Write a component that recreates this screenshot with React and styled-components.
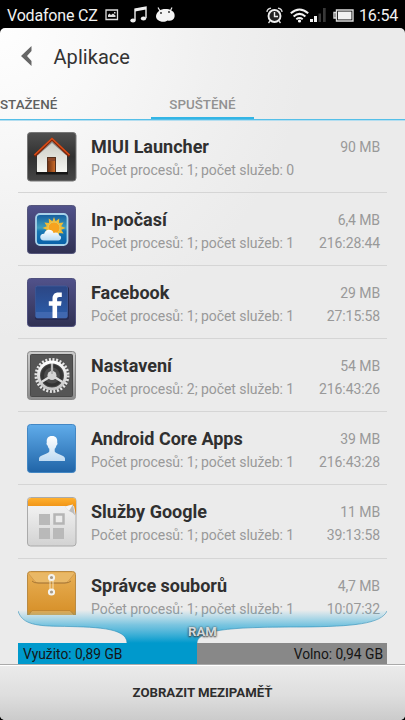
import React from 'react';
import styled, { createGlobalStyle } from 'styled-components';

const GlobalStyle = createGlobalStyle`
  * {
    box-sizing: border-box;
  }

  body {
    margin: 0;
    background: #000;
    font-family: Roboto, "Noto Sans", sans-serif;
  }
`;

const Phone = styled.div`
  display: flex;
  flex-direction: column;
  width: 405px;
  height: 720px;
  overflow: hidden;
  background: #000;
`;

const StatusBar = styled.header`
  display: flex;
  align-items: center;
  flex: none;
  height: 28px;
  padding: 2px 7px 0;
  color: #f2f2f2;
  font-size: 16px;

  svg {
    flex: none;
    display: block;
  }
`;

const Carrier = styled.span`
  width: 98px;
  letter-spacing: -0.18px;
  white-space: nowrap;
`;

const StatusIcons = styled.div`
  display: flex;
  align-items: center;
  flex: 1;
`;

const Clock = styled.time`
  width: 39px;
  letter-spacing: -0.15px;
  text-align: right;
`;

const Screen = styled.main`
  display: flex;
  flex-direction: column;
  flex: 1;
  min-height: 0;
  overflow: hidden;
  border-radius: 5px;
  background: radial-gradient(
    circle at 0 0,
    #fefefe 0,
    #f9f9f9 90px,
    #f0f0f0 215px,
    #ebebeb 310px,
    #ebebeb 100%
  );
`;

const TitleBar = styled.div`
  display: flex;
  align-items: center;
  flex: none;
  height: 60px;
  padding-left: 21px;

  svg {
    display: block;
    margin-top: -5px;
  }
`;

const Title = styled.h1`
  margin: -2px 0 0 20.5px;
  color: #333;
  font-size: 20px;
  font-weight: 400;
  letter-spacing: 0.05px;
`;

const Tabs = styled.nav`
  display: flex;
  flex: none;
  height: 32px;
  border-bottom: 1px solid #55bfe8;
  box-shadow: 0 1px 0 #b4def0;
`;

const Tab = styled.div`
  width: ${props => props.width}px;
  height: 31px;
  padding-top: 9px;
  border-bottom: ${props => (props.active ? '2px solid #33b5e5' : 'none')};
  color: ${props => (props.active ? '#929292' : '#606060')};
  font-size: 13.4px;
  font-weight: 500;
  line-height: 16px;
  text-align: ${props => (props.active ? 'center' : 'left')};
`;

const List = styled.ul`
  flex: none;
  height: 500px;
  margin: 0;
  padding: 0 18px;
  overflow: hidden;
  list-style: none;
`;

const Row = styled.li`
  display: flex;
  height: 73.1px;
  padding: 12px 7px 0 9px;
  border-bottom: 1px solid #d5d5d5;
`;

const AppIcon = styled.svg`
  flex: none;
  display: block;
  width: 50px;
  height: ${props => props.$visible || 50}px;
`;

const Info = styled.div`
  flex: 1;
  margin-left: 14px;
`;

const Line = styled.div`
  display: flex;
  justify-content: space-between;
  align-items: flex-start;
  height: ${props => props.height}px;
  color: #999;
  font-size: 14px;
  white-space: nowrap;
`;

const Name = styled.h2`
  margin: 0;
  color: #303030;
  font-size: 18px;
  font-weight: 700;
  line-height: 29px;
`;

const Detail = styled.span`
  line-height: 18px;
  letter-spacing: -0.05px;
`;

const Value = styled.span`
  line-height: ${props => props.height}px;
  letter-spacing: -0.1px;
`;

const Memory = styled.section`
  position: relative;
  display: flex;
  flex: none;
  height: 21px;
  margin: 23px 18px 0;
  color: #151515;
  font-size: 13.8px;
  line-height: 22px;
`;

const Used = styled.div`
  width: 179px;
  padding-left: 5px;
  background: #0099cc;
`;

const Free = styled.div`
  flex: 1;
  padding-right: 4px;
  background: #888;
  text-align: right;
`;

const Wave = styled.svg`
  position: absolute;
  left: 0;
  bottom: 21px;
`;

const WaveLabel = styled.span`
  position: absolute;
  left: 0;
  right: 0;
  top: -22px;
  color: #d4dade;
  font-size: 13.2px;
  font-weight: 700;
  text-align: center;
  text-shadow: 0 1px 2px #333, 0 0 2px #555;
`;

const Footer = styled.button`
  flex: 1;
  padding: 0;
  border: 0;
  border-top: 1px solid #aaa;
  box-shadow: inset 0 1px 0 #fff;
  background: linear-gradient(#ebebeb, #dedede 55%, #cbcbcb);
  color: #2d2d2d;
  font-family: inherit;
  font-size: 13.2px;
  font-weight: 700;
`;

const LauncherIcon = () => (
  <AppIcon viewBox="0 0 50 50">
    <defs>
      <linearGradient id="launcher" x2="0" y2="1">
        <stop stopColor="#505050" />
        <stop offset=".5" stopColor="#303030" />
        <stop offset="1" stopColor="#454545" />
      </linearGradient>
      <linearGradient id="wall" x2="0" y2="1">
        <stop stopColor="#c8c8c0" />
        <stop offset="1" stopColor="#f6f6f2" />
      </linearGradient>
      <linearGradient id="door">
        <stop stopColor="#713414" />
        <stop offset="1" stopColor="#c96a28" />
      </linearGradient>
    </defs>
    <rect x=".5" y=".5" width="48.5" height="48.5" rx="3" fill="url(#launcher)" stroke="#777" />
    <path d="M9 41h32" stroke="#161616" strokeWidth="3" />
    <path d="M10 40V21L25 8l15 13v19z" fill="url(#wall)" />
    <path d="M10 23L25 10l15 13" fill="none" stroke="#888" strokeWidth="1.5" />
    <path d="M7.5 24L25 7.2 42.5 24" fill="none" stroke="#7e2508" strokeWidth="2.6" />
    <path d="M7.5 23L25 6.5 42.5 23" fill="none" stroke="#d94d18" strokeWidth="1.6" />
    <path d="M20 25h9v15h-9z" fill="#54301e" />
    <path d="M21 26h7v14h-7z" fill="url(#door)" />
    <path d="M21 26h7v3h-7z" fill="#8e492a" />
  </AppIcon>
);

const WeatherIcon = () => (
  <AppIcon viewBox="0 0 50 50">
    <defs>
      <linearGradient id="purple" x2="0" y2="1">
        <stop stopColor="#51528b" />
        <stop offset="1" stopColor="#303153" />
      </linearGradient>
      <linearGradient id="sky" x2="0" y2="1">
        <stop stopColor="#125b9e" />
        <stop offset=".45" stopColor="#409fbd" />
        <stop offset=".55" stopColor="#1777b4" />
        <stop offset="1" stopColor="#0860a8" />
      </linearGradient>
      <linearGradient id="cloud" x2="0" y2="1">
        <stop stopColor="#fff" />
        <stop offset="1" stopColor="#b9dcf4" />
      </linearGradient>
    </defs>
    <rect x=".5" y=".5" width="48" height="48" rx="3" fill="url(#purple)" stroke="#55567c" />
    <rect x="9" y="9" width="31.5" height="31" rx="4" fill="url(#sky)" stroke="#a8d2e9" strokeWidth="1.8" />
    <path
      d="M27 12l1.6 4.3 3.7-2.7-.3 4.5 4.6-.6-2.4 3.8 4.3 1.7-4.3 1.7 2.4 3.8-4.6-.6.3 4.5-3.7-2.7L27 34l-1.6-4.3-3.7 2.7.3-4.5-4.6.6 2.4-3.8-4.3-1.7 4.3-1.7-2.4-3.8 4.6.6-.3-4.5 3.7 2.7z"
      fill="#f1bb35"
    />
    <circle cx="27" cy="23" r="6" fill="#f6a31f" stroke="#e3cc64" />
    <path
      d="M17 35.500c-5 0-5-7 .2-6.700 1-5.200 8.500-5.200 9.300-.8 3-1.500 5.200.2 5.400 2.300 3.500.7 2.500 5.200-.5 5.200z"
      fill="url(#cloud)"
    />
  </AppIcon>
);

const FacebookIcon = () => (
  <AppIcon viewBox="0 0 50 50">
    <defs>
      <linearGradient id="fb" x2="0" y2="1">
        <stop stopColor="#2c4684" />
        <stop offset="1" stopColor="#2b5daa" />
      </linearGradient>
    </defs>
    <rect x=".5" y=".5" width="48" height="48" rx="3" fill="url(#purple)" stroke="#50517e" />
    <rect x="8" y="8.5" width="34" height="33.5" rx="2.5" fill="#252a50" />
    <rect x="8.5" y="8" width="32" height="32" rx="2" fill="url(#fb)" stroke="#4260a2" strokeWidth=".7" />
    <path d="M9 34h31v4.500q0 1.500-1.500 1.500h-28Q9 40 9 38.500z" fill="#4068b0" />
    <path
      d="M25.500 40V27.800h-3.700v-4.600h3.700v-2.700c0-3.900 2.300-6 5.700-6h3.600v4.600h-2.600c-1.500 0-2.100.7-2.100 2v2.100h4.500l-.6 4.600h-3.900V40z"
      fill="#fff"
    />
  </AppIcon>
);

const SettingsIcon = () => (
  <AppIcon viewBox="0 0 50 50">
    <defs>
      <linearGradient id="frame" x2="0" y2="1">
        <stop stopColor="#ccc" />
        <stop offset="1" stopColor="#8c8c8c" />
      </linearGradient>
      <linearGradient id="metal" x2="0" y2="1">
        <stop stopColor="#fff" />
        <stop offset="1" stopColor="#c5c5c5" />
      </linearGradient>
    </defs>
    <rect x=".5" y=".5" width="48" height="48" rx="3" fill="url(#frame)" stroke="#888" />
    <rect x="3.5" y="3.5" width="42" height="42" rx="1" fill="#555" stroke="#484848" />
    <circle cx="25" cy="26" r="14" fill="#333" />
    <circle cx="25" cy="24.5" r="16" fill="none" stroke="#e5e5e5" strokeWidth="3" strokeDasharray="2 1.59" />
    <circle cx="25" cy="24.5" r="13.5" fill="#4b4b4b" stroke="url(#metal)" strokeWidth="3" />
    <circle cx="25" cy="24.5" r="9.5" fill="none" stroke="#333" strokeWidth="3" />
    <path d="M25 24.500V12M25 24.500l-10.500 6.500M25 24.500L35.500 31" stroke="#ddd" strokeWidth="2.2" />
    <circle cx="25" cy="24.5" r="4.5" fill="#d5d5d5" />
    <path d="M25 13v10" stroke="#777" strokeWidth=".7" />
  </AppIcon>
);

const ContactsIcon = () => (
  <AppIcon viewBox="0 0 50 50">
    <defs>
      <linearGradient id="blue" x2="0" y2="1">
        <stop stopColor="#60acea" />
        <stop offset="1" stopColor="#2064a7" />
      </linearGradient>
      <linearGradient id="person" x2="0" y2="1">
        <stop stopColor="#fff" />
        <stop offset="1" stopColor="#bfdbf2" />
      </linearGradient>
    </defs>
    <rect x=".5" y=".5" width="48" height="48" rx="3" fill="url(#blue)" stroke="#4387c4" />
    <path
      d="M25 12c4 0 5.700 2.500 5.200 6.500.7.700.2 2.500-.8 3-.4 1.600-.8 2.500-1.700 3.300v2.600c1.500 2.800 10 3.400 10.300 7.100V37H12v-2.500c.3-3.700 8.800-4.300 10.300-7.100v-2.600c-.9-.8-1.300-1.700-1.700-3.300-1-.5-1.500-2.300-.8-3-.5-4 1.200-6.500 5.200-6.500z"
      fill="url(#person)"
    />
  </AppIcon>
);

const ServicesIcon = () => (
  <AppIcon viewBox="0 0 50 50">
    <defs>
      <linearGradient id="paper" x2="0" y2="1">
        <stop stopColor="#f8f8f8" />
        <stop offset="1" stopColor="#d2d2d2" />
      </linearGradient>
      <linearGradient id="orange" x2="0" y2="1">
        <stop stopColor="#ffb02e" />
        <stop offset="1" stopColor="#e17900" />
      </linearGradient>
    </defs>
    <rect x=".5" y=".5" width="48.5" height="48.5" rx="3" fill="url(#paper)" stroke="#aaa" />
    <path d="M1 9V4q0-3 3-3h42q3 0 3 3v14l-2-9z" fill="url(#orange)" />
    <path d="M38 9.500l8-2 2 11q-2-3.500-6-4.500z" fill="#bbb" />
    <path d="M38 9.500l8-2-4 6.500z" fill="#f5f5f5" />
    <path d="M12 17h11v11H12zM12 31h11v11H12zM26 31h11v11H26z" fill="#b9b9b9" />
    <path d="M27.500 17.500h9v9h-9z" fill="#ececec" stroke="#b5b5b5" strokeWidth="2.5" />
  </AppIcon>
);

// Last row of the list, its icon runs out under the RAM wave
const FilesIcon = () => (
  <AppIcon viewBox="0 0 50 50" preserveAspectRatio="xMidYMin slice" $visible={44.5}>
    <defs>
      <linearGradient id="folder" x2="0" y2="1">
        <stop stopColor="#e8b056" />
        <stop offset="1" stopColor="#d48b22" />
      </linearGradient>
    </defs>
    <rect x=".5" y=".5" width="48" height="48" rx="3" fill="url(#folder)" stroke="#b98a43" />
    <path d="M1 2l7 8.500q1 1.500 4 1.500h25q3 0 4-1.500L48 2" fill="#e9b866" stroke="#c8924a" strokeWidth=".7" />
    <path d="M5 10q1.500 2 6 2h27q4 0 6-2" fill="none" stroke="#996c30" strokeWidth=".8" />
    <path d="M1 45l4-5.500h38l5 5.500" fill="#e5a74d" stroke="#be8130" strokeWidth=".8" />
    <path d="M23 7v14M26 7v14" stroke="#fff2d4" strokeWidth=".8" />
    <circle cx="24.5" cy="6.5" r="2.6" fill="#a99b88" stroke="#f3f3ef" strokeWidth="2" />
    <circle cx="24.5" cy="21" r="2.6" fill="#a99b88" stroke="#f3f3ef" strokeWidth="2" />
  </AppIcon>
);

const apps = [
  { name: 'MIUI Launcher', icon: LauncherIcon, size: '90 MB', processes: 1, services: 0 },
  { name: 'In-počasí', icon: WeatherIcon, size: '6,4 MB', processes: 1, services: 1, time: '216:28:44' },
  { name: 'Facebook', icon: FacebookIcon, size: '29 MB', processes: 1, services: 1, time: '27:15:58' },
  { name: 'Nastavení', icon: SettingsIcon, size: '54 MB', processes: 2, services: 1, time: '216:43:26' },
  { name: 'Android Core Apps', icon: ContactsIcon, size: '39 MB', processes: 1, services: 1, time: '216:43:28' },
  { name: 'Služby Google', icon: ServicesIcon, size: '11 MB', processes: 1, services: 1, time: '39:13:58' },
  { name: 'Správce souborů', icon: FilesIcon, size: '4,7 MB', processes: 1, services: 1, time: '10:07:32' },
];

const Glyph = styled.svg`
  margin-left: ${props => props.$left || 0};
`;

const StatusGlyphs = () => (
  <StatusIcons>
    <Glyph width="14" height="12" viewBox="0 0 14 12">
      <path d="M1 1h11.500v9.500H1z" fill="none" stroke="#ddd" strokeWidth="1.3" />
      <path d="M3 8V6l1.500-1.500 1.500 1.500 2-1.500 2.500 2V8z" fill="#ddd" />
      <path d="M9 3h1.500v1.500H9z" fill="#ddd" />
    </Glyph>
    <Glyph width="17" height="18" viewBox="0 0 17 18" $left="11px">
      <path d="M5 14V3l11-2v11" fill="none" stroke="#eee" strokeWidth="1.4" />
      <path d="M5 3l11-2v2.500L5 5.500z" fill="#eee" />
      <ellipse cx="3" cy="14.5" rx="2.7" ry="1.9" fill="#eee" />
      <ellipse cx="13.5" cy="12.5" rx="2.7" ry="1.9" fill="#eee" />
    </Glyph>
    <Glyph width="21" height="16" viewBox="0 0 21 16" $left="8px">
      <path d="M5 4L3 .5M15.500 3.500L17 .5" stroke="#eee" strokeWidth="1.2" />
      <path
        d="M4 4c3-2.500 9-2.500 12.500-.5C19.500 5 20 8 19.500 10c-.5 3-4 4.500-7 3.500C10 15.500 5 15 3 13c-3-2-2.500-6.500 1-9z"
        fill="#f5f5f5"
      />
      <circle cx="6" cy="6" r=".9" fill="#222" />
      <circle cx="14" cy="5" r=".9" fill="#222" />
    </Glyph>
    <Glyph width="17" height="17" viewBox="0 0 17 17" $left="auto">
      <circle cx="8.5" cy="9" r="6" fill="#222" stroke="#eee" strokeWidth="1.9" />
      <path d="M8.500 5v4.500H12" fill="none" stroke="#eee" strokeWidth="1.4" />
      <path d="M1 5q0-3 4-3.800M16 5q0-3-4-3.800M4 14l-1.500 2M13 14l1.500 2" fill="none" stroke="#ddd" strokeWidth="1.3" />
    </Glyph>
    <Glyph width="19" height="15" viewBox="0 0 19 15" $left="7px">
      <path
        d="M.8 5.300q8.700-7.600 17.400 0M3.600 8.500q5.900-5.200 11.800 0M6.300 11.200q3.200-2.500 6.400 0"
        fill="none"
        stroke="#f2f2f2"
        strokeWidth="2"
      />
      <circle cx="9.5" cy="13" r="1.6" fill="#fff" />
    </Glyph>
    <Glyph width="17" height="14" viewBox="0 0 17 14" $left="1px">
      <path d="M0 11h3v3H0zM4 8h3v6H4z" fill="#f2f2f2" />
      <path d="M8.500 5.500h2.500V14H8.500zM13 0h2.700v14H13z" fill="#383838" />
    </Glyph>
    <Glyph width="26" height="13" viewBox="0 0 26 13" $left="6px">
      <path d="M3.500 1H20v11H3.500zM3 3.500H1v5.500h2z" fill="none" stroke="#ddd" strokeWidth="1.4" />
      <path d="M5 2.500h13.500v8H5z" fill="#f1f1f1" />
    </Glyph>
  </StatusIcons>
);

class App extends React.Component {
  render() {
    return (
      <Phone>
        <GlobalStyle />
        <StatusBar>
          <Carrier>Vodafone CZ</Carrier>
          <StatusGlyphs />
          <Clock>16:54</Clock>
        </StatusBar>
        <Screen>
          <TitleBar>
            <svg width="12" height="20" viewBox="0 0 12 20">
              <path d="M10.500 0v5L6 10l4.500 5v5L0 10z" fill="#666" />
            </svg>
            <Title>Aplikace</Title>
          </TitleBar>
          <Tabs>
            <Tab width={151}>STAŽENÉ</Tab>
            <Tab width={103} active>
              SPUŠTĚNÉ
            </Tab>
          </Tabs>
          <List>
            {apps.map(({ name, icon: Icon, size, processes, services, time }) => (
              <Row key={name}>
                <Icon />
                <Info>
                  <Line height={29}>
                    <Name>{name}</Name>
                    <Value height={30}>{size}</Value>
                  </Line>
                  <Line height={18}>
                    <Detail>
                      Počet procesů: {processes}; počet služeb: {services}
                    </Detail>
                    <Value height={18}>{time}</Value>
                  </Line>
                </Info>
              </Row>
            ))}
          </List>
          <Memory>
            <Wave width="369" height="36" viewBox="0 0 369 36">
              <defs>
                <linearGradient id="water" gradientUnits="userSpaceOnUse" x1="0" y1="3" x2="0" y2="36">
                  <stop stopColor="#33b5e5" stopOpacity="0" />
                  <stop offset=".45" stopColor="#2fabd8" stopOpacity=".6" />
                  <stop offset="1" stopColor="#0099cc" />
                </linearGradient>
              </defs>
              <path
                d="M0 3C4 16 15 19 40 19.300C75 20 109 20 109 36H179C180 22 215 20 285 20C335 19.500 363 17 369 3Z"
                fill="url(#water)"
              />
              <path
                d="M0 4C4 16 15 19 40 19.300C75 20 109 20 109 36M179 36C180 22 215 20 285 20C335 19.500 363 17 369 4"
                fill="none"
                stroke="#2a8db9"
                strokeOpacity=".6"
              />
            </Wave>
            <WaveLabel>RAM</WaveLabel>
            <Used>Využito: 0,89 GB</Used>
            <Free>Volno: 0,94 GB</Free>
          </Memory>
          <Footer>ZOBRAZIT MEZIPAMĚŤ</Footer>
        </Screen>
      </Phone>
    );
  }
}

export default App;
